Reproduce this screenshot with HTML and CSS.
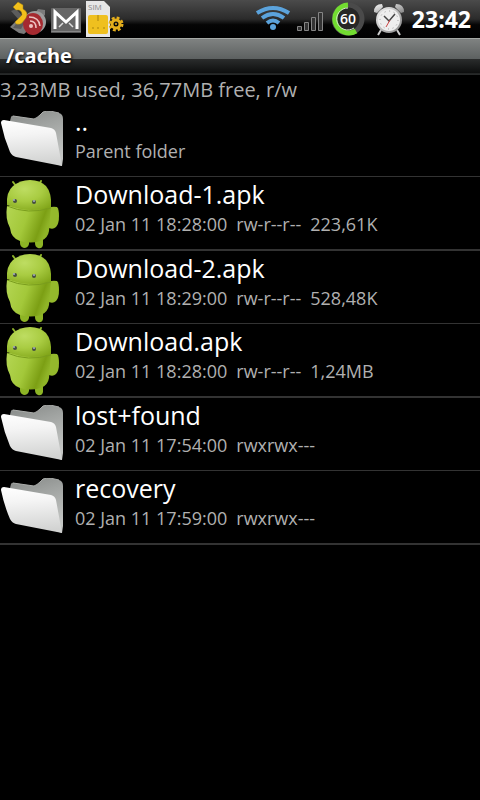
FILE: index.html
```html
<!DOCTYPE html>
<html lang="en">
<head>
<meta charset="utf-8">
<meta name="viewport" content="width=device-width, initial-scale=1">
<title>/cache</title>
<link rel="stylesheet" href="styles.css">
</head>
<body>
<svg class="defs" aria-hidden="true">
  <defs>
    <linearGradient id="front" x1="0" y1="0" x2="0.1" y2="1">
      <stop offset="0" stop-color="#ffffff"/><stop offset="0.35" stop-color="#f4f4f4"/><stop offset="1" stop-color="#d2d3d2"/>
    </linearGradient>
    <linearGradient id="back" x1="0" y1="0" x2="0.3" y2="1">
      <stop offset="0" stop-color="#858886"/><stop offset="0.4" stop-color="#a0a3a1"/><stop offset="1" stop-color="#c4c6c4"/>
    </linearGradient>
    <linearGradient id="green" x1="0" y1="0" x2="1" y2="0.3">
      <stop offset="0" stop-color="#b4d653"/><stop offset="0.5" stop-color="#a3c83a"/><stop offset="0.85" stop-color="#7c9f14"/><stop offset="1" stop-color="#8fb427"/>
    </linearGradient>
    <radialGradient id="head" cx="0.4" cy="0.3" r="0.8">
      <stop offset="0" stop-color="#bedd62"/><stop offset="0.5" stop-color="#a9cc42"/><stop offset="1" stop-color="#83a71b"/>
    </radialGradient>
    <linearGradient id="metal" x1="0" y1="0" x2="1" y2="1">
      <stop offset="0" stop-color="#f4f4f4"/><stop offset="1" stop-color="#858585"/>
    </linearGradient>
    <symbol id="folder" viewBox="0 0 66 58">
      <path d="M10 10 11 6Q12 4 14 5L34 8Q37 7 40 4L43 1Q46 0 50 0L59 2Q63 3 63 8V48L62 55 12 38Z" fill="url(#back)"/>
      <path d="M13 5 34 8Q37 7 40 4L43 1Q46 0 50 0L59 2" fill="none" stroke="#a9aba9"/>
      <path d="M1 12Q1 9 4 9L51 17Q55 18 56 22L62 55 57 54 16 46Q12 45 10 41Q4 27 1 12Z" fill="url(#front)"/>
    </symbol>
    <symbol id="robot" viewBox="0 0 66 72">
      <path d="M13 5 16 9M41 4 39 9" stroke="#8fb52b" stroke-width="2" stroke-linecap="round"/>
      <path d="M49 31Q52 29 57 30Q59 32 59 39Q59 47 56 50Q53 53 49 51Z" fill="#94b92c"/>
      <path d="M20 61H29V67Q28 71 24 71Q20 70 20 66ZM35 61H43V68Q42 72 38 71Q35 70 35 66Z" fill="#8db425"/>
      <path d="M7 29Q5 42 10 51Q11 61 20 64Q30 67 41 64Q48 61 49 54L51 29Z" fill="url(#green)"/>
      <path d="M7 28Q6 15 13 9Q20 3 30 3Q40 3 46 9Q52 16 51 30Q30 37 7 28Z" fill="url(#head)"/>
      <path d="M7 29Q28 38 51 31" fill="none" stroke="#7a9d1d"/>
      <g fill="#454e42"><circle cx="15" cy="24" r="2"/><circle cx="34" cy="25" r="2"/></g>
      <g fill="#aab3c4"><circle cx="14" cy="23" r="1"/><circle cx="34" cy="24" r="1"/></g>
    </symbol>
  </defs>
</svg>

<header class="status">
  <div class="notices">
    <svg width="40" height="38" viewBox="0 0 40 38" role="img" aria-label="Call feed">
      <path d="M2 27 9 20 18 26 30 9 37 10 37 15 16 34 11 33Z" fill="#7b7b7b"/>
      <path d="M3 11 8 9 18 20 13 29 5 28 11 20Z" fill="#5c5c5c"/>
      <circle cx="27" cy="22" r="11" fill="#9d9d9d"/><ellipse cx="25" cy="24" rx="10" ry="11" fill="#a52a30"/>
      <g fill="none" stroke="#edc2c2" stroke-width="1.5"><path d="M22 21Q28 21 28 28M21 17Q31 17 32 26"/></g><circle cx="23" cy="26" r="2" fill="#edc2c2"/>
      <path d="M5 7 10 2 15 5 15 9Q21 12 18 18L14 23Q12 25 8 24L7 22 14 15Q14 11 11 10L8 10Z" fill="#f2c01b" stroke="#9c7d19" stroke-width=".5"/>
    </svg>
    <svg width="32" height="38" viewBox="0 0 32 38" role="img" aria-label="Mail">
      <rect x="1" y="8" width="30" height="24" rx="1" fill="#666"/><path d="M1 32H31" stroke="#aaa"/>
      <path d="M5 29V12L16 22 27 12V29" fill="none" stroke="#fff" stroke-width="3"/>
      <path d="M9 27 13 23M23 27 19 23" stroke="#ddd" stroke-width="1.5"/>
    </svg>
    <svg class="sim" width="38" height="38" viewBox="0 0 38 38" role="img" aria-label="SIM settings">
      <path d="M0 1H18L24 7V37H0Z" fill="#e6e6e6"/><text x="2" y="10" class="sim-label">SIM</text>
      <rect x="2" y="15" width="20" height="19" rx="2" fill="#efc01f"/>
      <path d="M12 15V21M6 28H8M11 28H13M17 28H19" stroke="#a9850e"/>
      <circle cx="30" cy="24" r="6" fill="none" stroke="#e4ae1c" stroke-width="3" stroke-dasharray="2.7 2"/>
      <circle cx="30" cy="24" r="4" fill="none" stroke="#e4ae1c" stroke-width="3"/><circle cx="30" cy="24" r="1" fill="#e4ae1c"/>
    </svg>
  </div>
  <div class="indicators">
    <svg width="34" height="38" viewBox="0 0 34 38" role="img" aria-label="Wi-Fi">
      <g fill="none" stroke="#5ba3dc" stroke-width="4"><path d="M1 13Q17 3 33 13M6 18Q17 10 28 18M11 23Q17 18 23 23"/></g><circle cx="17" cy="27" r="3" fill="#5ba3dc"/>
    </svg>
    <svg width="28" height="38" viewBox="0 0 28 38" role="img" aria-label="Signal">
      <path d="M.5 26.5h4v4h-4zM7.5 22.5h4v8h-4zM14.5 17.5h4v13h-4zM21.5 12.5h4v18h-4z" fill="#333" stroke="#858585"/>
    </svg>
    <svg width="34" height="38" viewBox="0 0 34 38" role="img" aria-label="Battery 60">
      <circle cx="16" cy="19" r="14" fill="#262626" stroke="#4a4a4a" stroke-width="5"/>
      <path d="M16 5A14 14 0 1 0 24 31" fill="none" stroke="#72dc30" stroke-width="5"/>
      <path d="M16 8A11 11 0 1 0 22 28" fill="none" stroke="#d5e8cb"/>
      <text x="16" y="24" class="battery-label">60</text>
    </svg>
    <svg width="32" height="38" viewBox="0 0 32 38" role="img" aria-label="Alarm">
      <path d="M8 30 5 35M24 30 27 35" stroke="#ccc" stroke-width="2"/>
      <path d="M1 12Q1 4 9 4L10 7 4 13ZM31 12Q31 4 23 4L22 7 28 13Z" fill="url(#metal)"/>
      <circle cx="16" cy="20" r="13" fill="url(#metal)"/><circle cx="16" cy="20" r="11" fill="#eee"/>
      <circle cx="16" cy="20" r="9" fill="none" stroke="#999" stroke-dasharray="1 3.7"/>
      <path d="M11 16 16 21 22 14" fill="none" stroke="#444" stroke-width="1.5"/><path d="M17 20 13 27" stroke="#c44"/>
    </svg>
    <time>23:42</time>
  </div>
</header>
<h1 class="title">/cache</h1>
<main>
  <p class="usage">3,23MB used, 36,77MB free, r/w</p>
  <ul class="files">
    <li><svg class="icon"><use href="#folder"/></svg><div><h2>..</h2><p>Parent folder</p></div></li>
    <li><svg class="icon apk"><use href="#robot"/></svg><div><h2>Download-1.apk</h2><p><span>02 Jan 11 18:28:00</span><span>rw-r--r--</span><span>223,61K</span></p></div></li>
    <li><svg class="icon apk"><use href="#robot"/></svg><div><h2>Download-2.apk</h2><p><span>02 Jan 11 18:29:00</span><span>rw-r--r--</span><span>528,48K</span></p></div></li>
    <li><svg class="icon apk"><use href="#robot"/></svg><div><h2>Download.apk</h2><p><span>02 Jan 11 18:28:00</span><span>rw-r--r--</span><span>1,24MB</span></p></div></li>
    <li><svg class="icon"><use href="#folder"/></svg><div><h2>lost+found</h2><p><span>02 Jan 11 17:54:00</span><span>rwxrwx---</span></p></div></li>
    <li><svg class="icon"><use href="#folder"/></svg><div><h2>recovery</h2><p><span>02 Jan 11 17:59:00</span><span>rwxrwx---</span></p></div></li>
  </ul>
</main>
</body>
</html>
```
FILE: styles.css
```css
* { box-sizing: border-box; margin: 0; padding: 0; }
body { background: #000; color: #fff; font-family: "Open Sans", "Noto Sans", sans-serif; }
.defs { position: absolute; width: 0; height: 0; }
svg { display: block; flex: none; }
.status {
  display: flex; justify-content: space-between; height: 38px; padding: 0 9px 0 8px;
  background: linear-gradient(#4b4b4b, #2b2b2b 50%, #050505 65%, #000);
}
.notices, .indicators { display: flex; align-items: center; }
.notices { gap: 2px; }
.indicators { gap: 7px; }
.sim { margin-left: 2px; }
.sim-label { font-size: 8px; fill: #888; }
.battery-label { font-size: 14px; font-weight: 600; fill: #fff; text-anchor: middle; }
time { font-size: 23px; line-height: 38px; font-weight: 700; }
.title {
  height: 37px; padding-left: 6px; border-top: 1px solid #a5a8a5;
  font-size: 20px; line-height: 34px; font-weight: 700; text-shadow: 1px 1px 3px #000;
  background: linear-gradient(#7f8281, #5d6161 55%, #2b2d2d 55%, #0c0d0d 95%, #272929 96%);
}
.usage { height: 29px; font-size: 20px; line-height: 30px; color: #b0b0b0; }
.files { list-style: none; }
.files li { display: flex; gap: 9px; border-bottom: 1px solid #333; }
.files li:nth-child(even) { border-bottom-width: 2px; }
.icon { width: 66px; height: 58px; margin-top: 7px; }
.apk { height: 72px; margin-top: 0; }
.files h2 { height: 36px; font-size: 25px; line-height: 35px; font-weight: 400; }
.files p { display: flex; gap: 9px; height: 36px; font-size: 18px; line-height: 23px; color: #b0b0b0; }
```
